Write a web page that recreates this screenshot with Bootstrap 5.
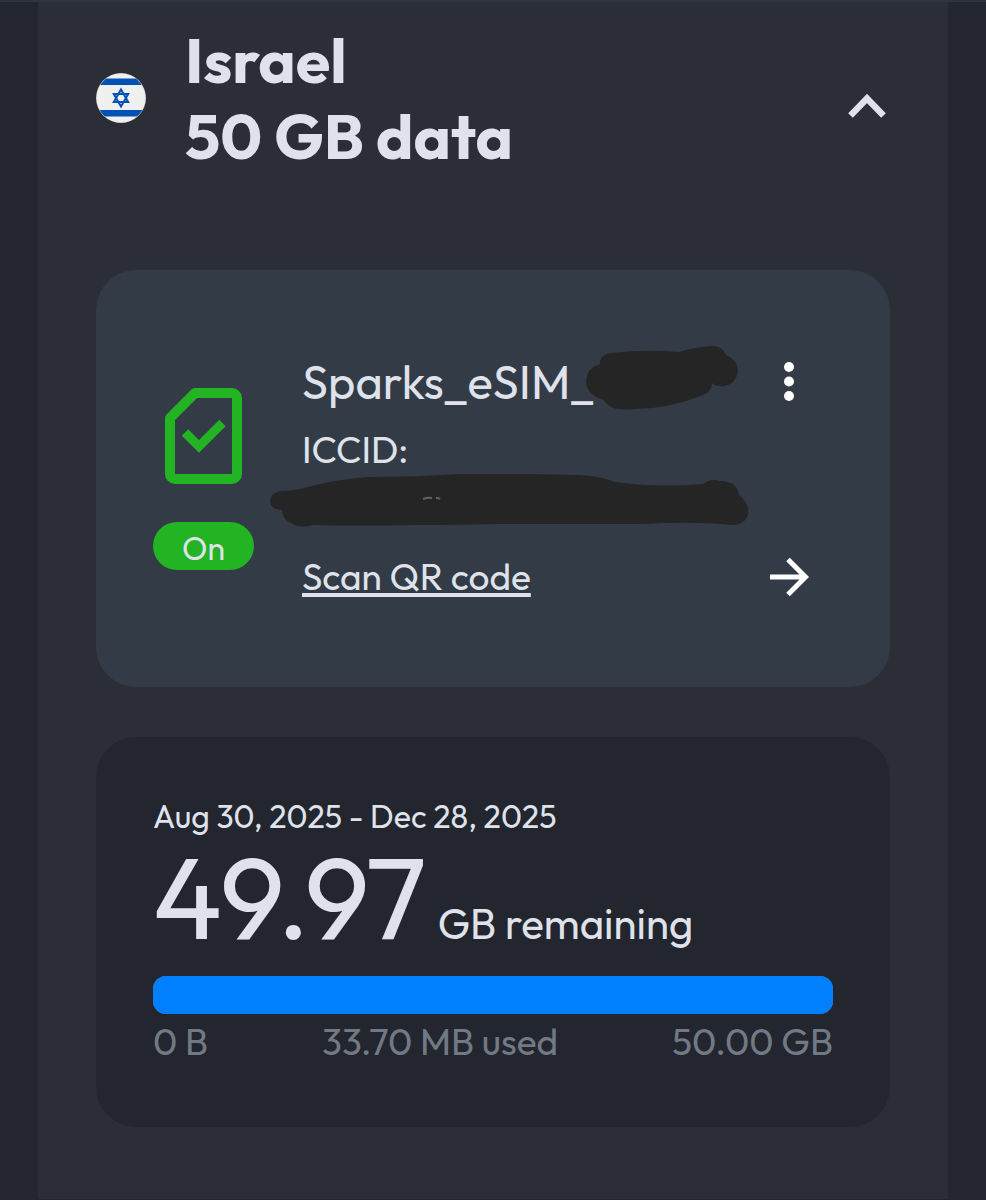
<!DOCTYPE html>
<html lang="en" data-bs-theme="dark">
<head>
<meta charset="utf-8">
<meta name="viewport" content="width=device-width, initial-scale=1">
<title>Israel 50 GB data</title>
<link rel="stylesheet" href="https://cdn.jsdelivr.net/npm/bootstrap@5.3.0/dist/css/bootstrap.min.css">
<style>
  body { background: #23262e; color: #dfe2ea; font-family: Outfit, Lato, sans-serif; border-top: 2px solid #30343e; }
  svg { display: block; }
  .plan-panel { background: #2c2e37; margin: 0 38px; padding: 20px 58px 72px; }
  .plan-head { gap: 37px; margin-bottom: 96px; }
  .plan-title { font-size: 63px; line-height: 76px; font-weight: 700; color: inherit; }
  .flag-icon { margin-top: 50px; }
  .icon-btn { background: none; border: 0; padding: 0; color: #fff; }
  .toggle-btn { color: #dfe2ea; margin: 72px 4px 0 0; }
  .tile { border: 0; border-radius: 40px; color: inherit; padding: 57px; }
  .tile-esim { background: #323b46; margin-bottom: 50px; min-height: 417px; }
  .tile-usage { background: #23262e; min-height: 390px; }
  .esim-row { gap: 48px; }
  .esim-state { width: 101px; gap: 38px; }
  .state-pill { background: #22b422; font-size: 32px; line-height: 48px; font-weight: 400; padding: 2px 0 0; height: 48px; color: #dfe2ea; }
  .esim-name { font-size: 47px; line-height: 60px; }
  .esim-iccid { font-size: 37px; line-height: 48px; margin-top: 14px; }
  .iccid-value { height: 74px; }
  .qr-link { font-size: 37px; line-height: 58px; color: inherit; text-decoration-thickness: 4px; text-underline-offset: 3px; text-decoration-skip-ink: none; }
  .qr-link:hover { color: #fff; }
  .scribble { position: absolute; pointer-events: none; }
  .scribble-name { left: 282px; top: -6px; }
  .scribble-iccid { left: -34px; top: 0; }
  .icon-right { margin-right: 24px; }
  .usage-dates { font-size: 32px; line-height: 44px; }
  .usage-left { gap: 11px; }
  .usage-number { font-size: 116px; line-height: 116px; }
  .usage-unit { font-size: 42px; }
  .usage-bar { height: 38px; margin-top: 21px; border-radius: 13px; --bs-progress-bar-bg: #007fff; background: #717985; }
  .usage-scale { font-size: 37px; line-height: 56px; color: #717985; }
</style>
</head>
<body>
<main class="plan-panel">
  <header class="plan-head d-flex align-items-start">
    <svg class="flag-icon flex-shrink-0" width="52" height="52" viewBox="0 0 52 52" role="img" aria-label="Israel flag">
      <defs><clipPath id="disc"><circle cx="25" cy="26" r="24.500"/></clipPath></defs>
      <circle cx="25" cy="26" r="25" fill="#b9b7b5"/>
      <g clip-path="url(#disc)">
        <path fill="#f0f0f0" d="M0 0h52v52H0z"/>
        <path fill="#0052b4" d="M0 6.500h52v6.500H0zM0 38h52v6.500H0z"/>
      </g>
      <path fill="none" stroke="#0052b4" stroke-width="2" d="M25 17.500l7.200 12.500H17.800zM25 34.500l7.200-12.500H17.800z"/>
    </svg>
    <h1 class="plan-title flex-grow-1 mb-0">Israel<br>50 GB data</h1>
    <button class="icon-btn toggle-btn" type="button" aria-label="Collapse">
      <svg width="38" height="24" viewBox="0 0 38 24"><path fill="none" stroke="currentColor" stroke-width="6.500" d="M2.500 21.500 19 4.500 35.500 21.500"/></svg>
    </button>
  </header>

  <section class="card tile tile-esim justify-content-center">
    <div class="esim-row d-flex align-items-center">
      <div class="esim-state d-flex flex-column align-items-center flex-shrink-0">
        <svg width="78" height="96" viewBox="0 0 78 96" aria-hidden="true">
          <path fill="none" stroke="#22b422" stroke-width="10" stroke-linejoin="round" d="M5 30 30 5h37a5 5 0 0 1 5 5v76a5 5 0 0 1-5 5H10a5 5 0 0 1-5-5z"/>
          <path fill="none" stroke="#22b422" stroke-width="9" d="M20 44.500 34 58.500 57.500 35"/>
        </svg>
        <span class="badge rounded-pill state-pill w-100">On</span>
      </div>
      <div class="flex-grow-1">
        <div class="position-relative d-flex align-items-center justify-content-between">
          <span class="esim-name">Sparks_eSIM_</span>
          <svg class="scribble scribble-name" width="156" height="66" viewBox="0 0 156 66" aria-hidden="true">
            <path fill="#252525" d="M16 15Q18 8 27 7Q60 3 95 6Q110 1 130 0Q139 1 142 9Q154 14 154 25Q152 38 140 40Q132 41 128 37Q128 46 119 49Q85 63 50 63Q26 66 20 54Q2 49 2 35Q3 22 16 18Z"/>
          </svg>
          <button class="icon-btn icon-right" type="button" aria-label="More options">
            <svg width="40" height="40" viewBox="0 0 40 40" fill="currentColor"><circle cx="20" cy="5" r="5"/><circle cx="20" cy="19.500" r="5"/><circle cx="20" cy="34" r="5"/></svg>
          </button>
        </div>
        <div class="esim-iccid">ICCID:</div>
        <div class="iccid-value position-relative">
          <svg class="scribble scribble-iccid" width="482" height="58" viewBox="0 0 482 58" aria-hidden="true">
            <path fill="#252525" d="M12 17Q26 17 40 13Q70 5 100 3Q150 3 190 0Q230 -1 310 1Q333 2 347 8Q390 14 435 10Q443 4 452 7Q469 7 471 21Q482 30 480 40Q477 51 464 51Q425 47 375 50L230 50Q180 51 150 51Q90 52 45 51Q31 55 23 49Q14 45 14 36Q3 36 2 27Q3 19 12 17Z"/>
            <path fill="none" stroke="#74807c" stroke-width="2" stroke-opacity=".7" d="M155 25q5-2 9-1M168 24q3 0 4 1"/>
          </svg>
        </div>
        <div class="d-flex align-items-center justify-content-between">
          <a class="qr-link" href="#qr">Scan QR code</a>
          <button class="icon-btn icon-right" type="button" aria-label="Open QR code">
            <svg width="40" height="40" viewBox="0 0 40 40"><path fill="none" stroke="currentColor" stroke-width="5" d="M1 20h34M19 2.500 36.500 20 19 37.500"/></svg>
          </button>
        </div>
      </div>
    </div>
  </section>

  <section class="card tile tile-usage">
    <div class="usage-dates">Aug 30, 2025 - Dec 28, 2025</div>
    <div class="usage-left d-flex align-items-baseline">
      <span class="usage-number">49.97</span>
      <span class="usage-unit">GB remaining</span>
    </div>
    <div class="progress usage-bar" role="progressbar" aria-label="Data remaining" aria-valuenow="99.9" aria-valuemin="0" aria-valuemax="100">
      <div class="progress-bar w-100"></div>
    </div>
    <div class="usage-scale d-flex justify-content-between">
      <span>0 B</span><span>33.70 MB used</span><span>50.00 GB</span>
    </div>
  </section>
</main>
<script src="https://cdn.jsdelivr.net/npm/bootstrap@5.3.0/dist/js/bootstrap.bundle.min.js"></script>
</body>
</html>
